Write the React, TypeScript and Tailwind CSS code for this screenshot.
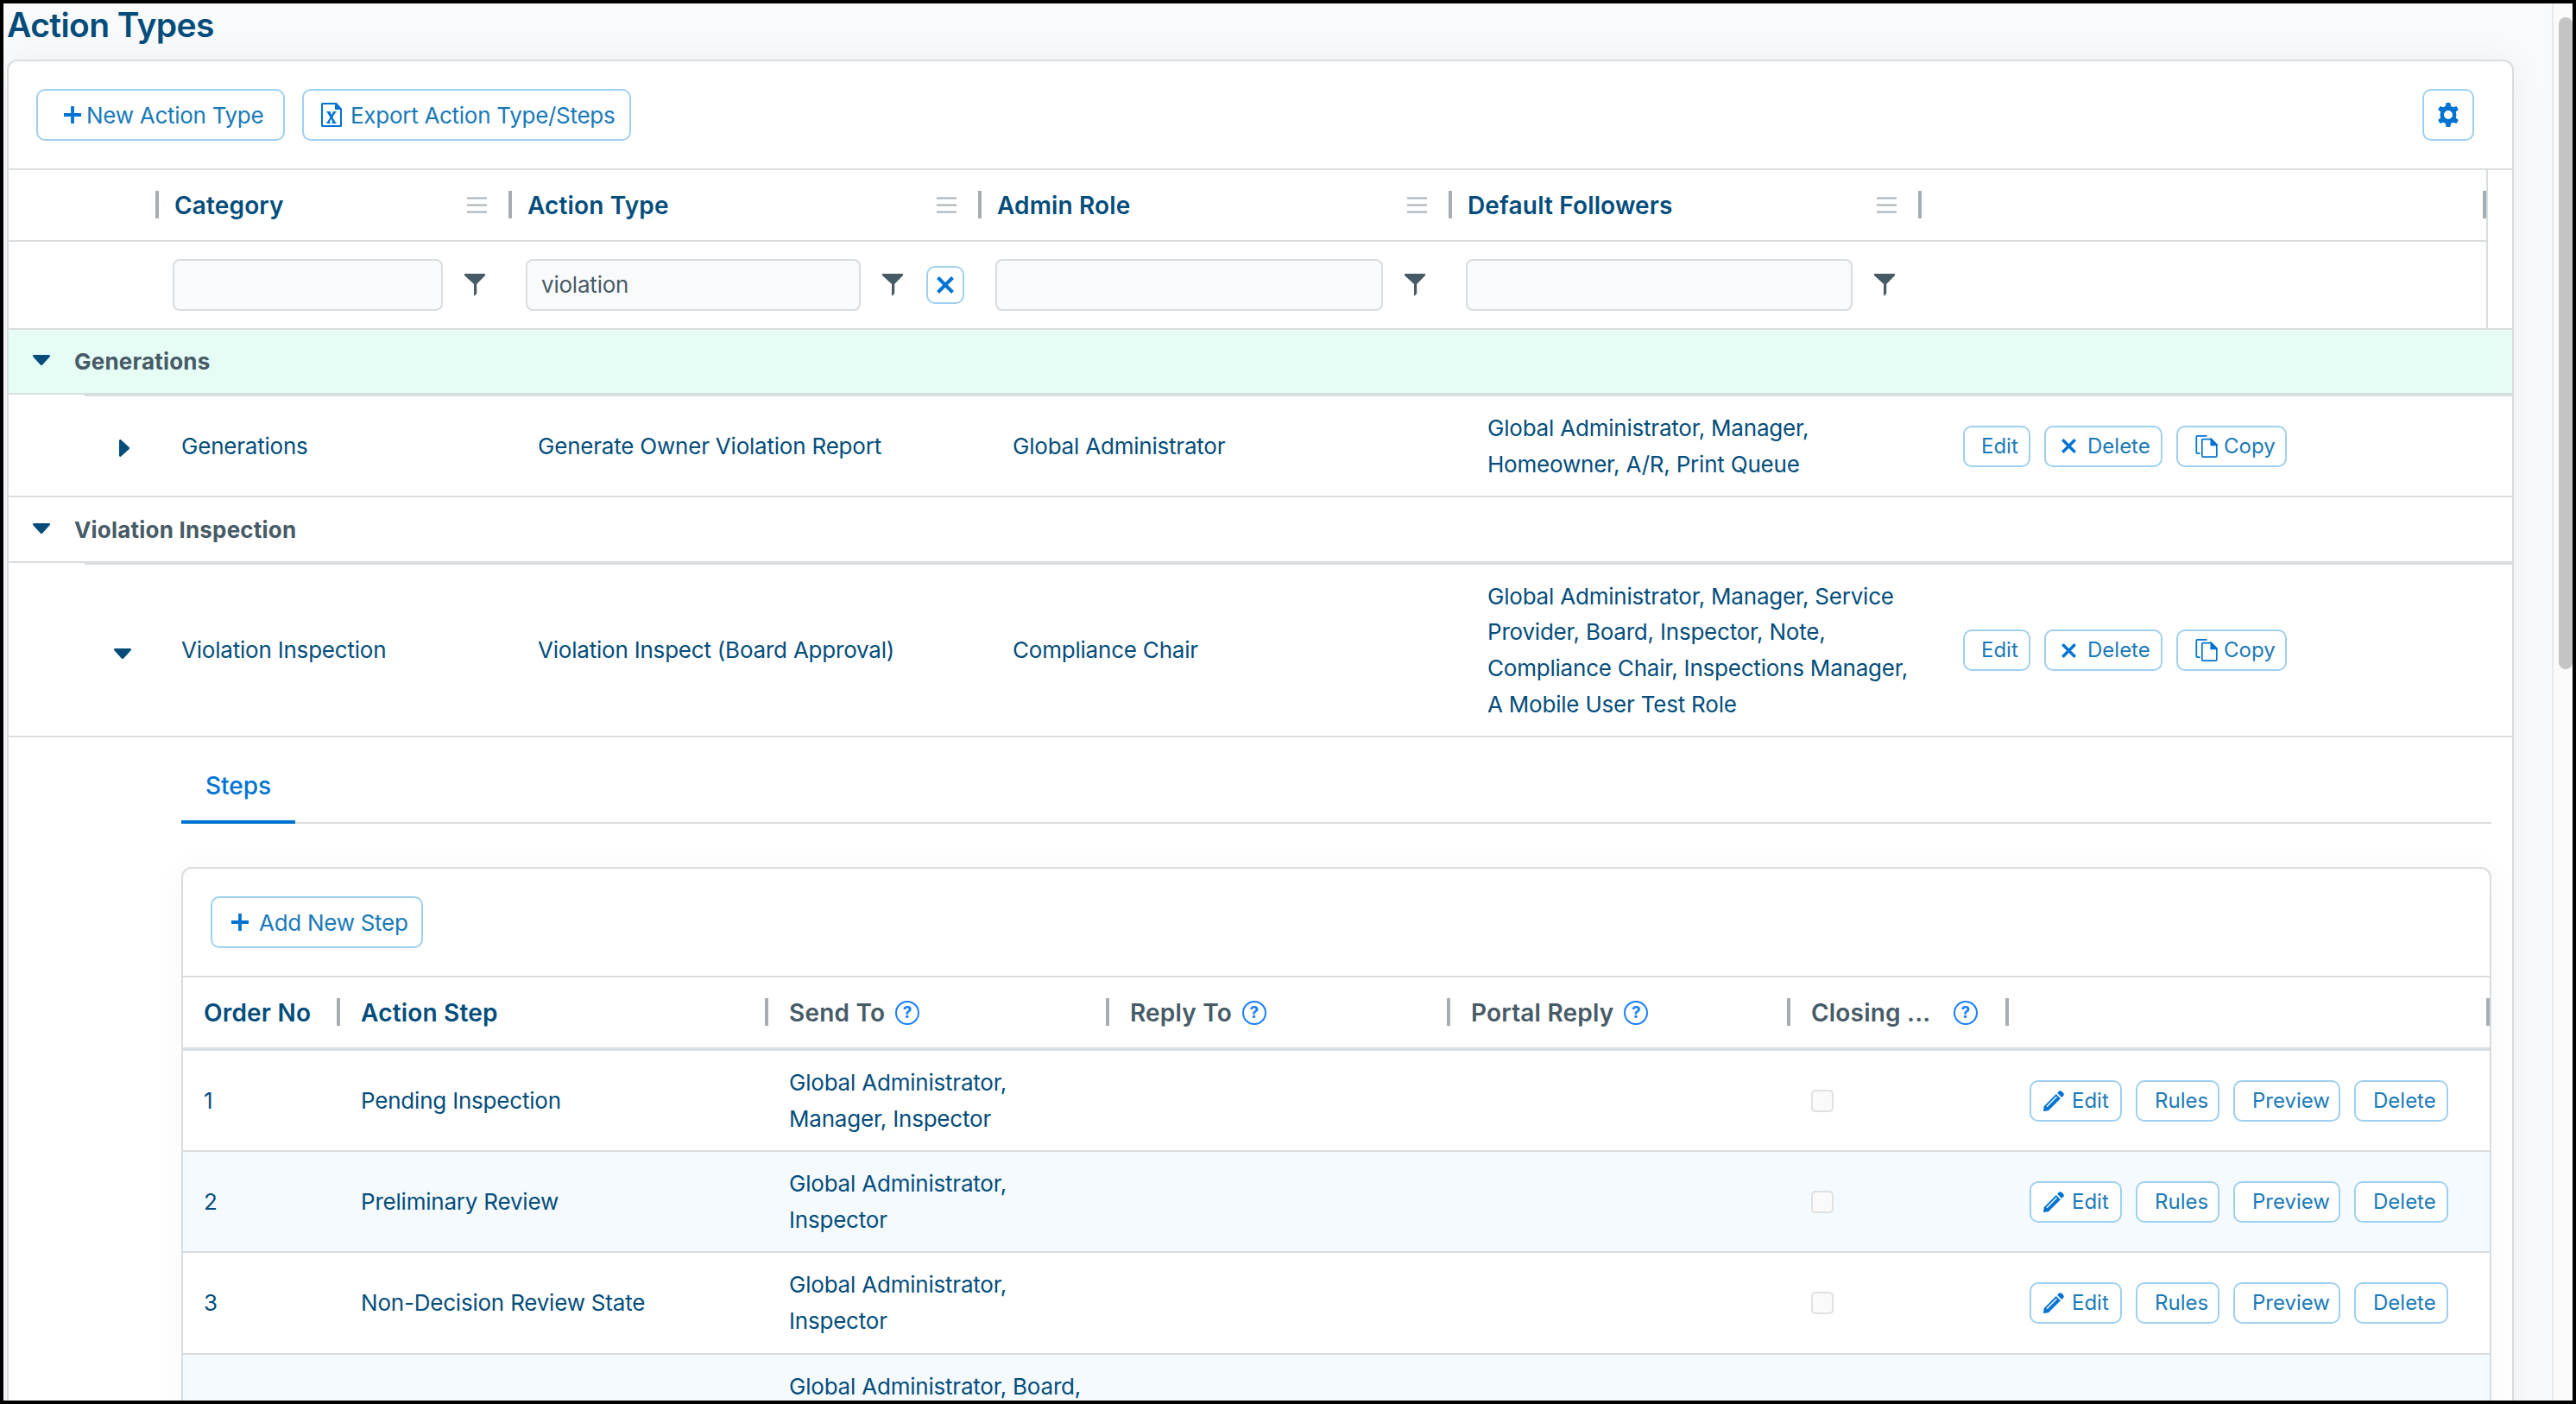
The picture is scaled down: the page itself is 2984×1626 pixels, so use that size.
import React from 'react';

interface ActionType {
  category: string;
  name: string;
  adminRole: string;
  followers: string[];
  expanded: boolean;
}

interface Step {
  order: number;
  name: string;
  sendTo: string[];
}

const generations: ActionType = {
  category: 'Generations',
  name: 'Generate Owner Violation Report',
  adminRole: 'Global Administrator',
  followers: ['Global Administrator, Manager,', 'Homeowner, A/R, Print Queue'],
  expanded: false,
};

const inspection: ActionType = {
  category: 'Violation Inspection',
  name: 'Violation Inspect (Board Approval)',
  adminRole: 'Compliance Chair',
  followers: [
    'Global Administrator, Manager, Service',
    'Provider, Board, Inspector, Note,',
    'Compliance Chair, Inspections Manager,',
    'A Mobile User Test Role',
  ],
  expanded: true,
};

const steps: Step[] = [
  { order: 1, name: 'Pending Inspection', sendTo: ['Global Administrator,', 'Manager, Inspector'] },
  { order: 2, name: 'Preliminary Review', sendTo: ['Global Administrator,', 'Inspector'] },
  { order: 3, name: 'Non-Decision Review State', sendTo: ['Global Administrator,', 'Inspector'] },
];

const PlusIcon = ({ className = '' }: { className?: string }) => (
  <svg className={`size-5 shrink-0 text-[#0073d2] ${className}`} viewBox="0 0 20 20" fill="currentColor">
    <path d="M8.1 0h3.8v8.1H20v3.8h-8.1V20H8.1v-8.1H0V8.1h8.1z" />
  </svg>
);

const CloseIcon = ({ className = '' }: { className?: string }) => (
  <svg className={`shrink-0 text-[#0073d2] ${className}`} viewBox="0 0 20 20" fill="none" stroke="currentColor" strokeWidth="4">
    <path d="M1.5 1.5l17 17M18.5 1.5l-17 17" />
  </svg>
);

const ExcelIcon = () => (
  <svg className="h-7 w-6 shrink-0 text-[#0073d2]" viewBox="0 0 24 28" fill="currentColor">
    <path fillRule="evenodd" d="M1.5 0H18l6 7v19.5a1.5 1.5 0 0 1-1.500 1.500h-21A1.500 1.500 0 0 1 0 26.500v-25A1.500 1.500 0 0 1 1.500 0zM2 2v24h20V8h-6V2z" />
    <path d="M6.500 10h4l1.700 4.200L14 10h3.500v1.600h-1l-3.200 5.200 3.200 5.600h1V24h-5v-1.600h1l-1.900-3.600-2 3.600h1V24h-4.500v-1.600h1l3.300-5.500-3.100-5.300H6.500z" />
  </svg>
);

const GearIcon = () => (
  <svg className="size-7 text-[#0073d2]" viewBox="0 0 28 28" fill="currentColor">
    <path fillRule="evenodd" d="M11.700 0h4.600l.8 3.900c.9.300 1.800.8 2.600 1.400l3.800-1.300 2.300 4-3 2.600a10 10 0 0 1 0 6.800l3 2.600-2.300 4-3.800-1.300c-.8.600-1.700 1.100-2.600 1.400l-.8 3.900h-4.600l-.8-3.900c-.9-.3-1.800-.8-2.600-1.400L4.500 24l-2.300-4 3-2.600a10 10 0 0 1 0-6.800L2.200 8l2.300-4 3.800 1.300c.8-.6 1.700-1.100 2.600-1.400zM14 9a5 5 0 1 0 0 10 5 5 0 0 0 0-10z" />
  </svg>
);

const CopyIcon = () => (
  <svg className="h-[26px] w-[26px] shrink-0 text-[#0073d2]" viewBox="0 0 26 26" fill="none" stroke="currentColor" strokeWidth="1.700">
    <path d="M5.500 21.200H2.500a1.200 1.200 0 0 1-1.200-1.200V2a1.200 1.200 0 0 1 1.200-1.200h11" />
    <path d="M9 4.600h9.500L24.800 11v13a1.200 1.200 0 0 1-1.200 1.200H9A1.200 1.200 0 0 1 7.800 24V5.800A1.200 1.200 0 0 1 9 4.600z" />
    <path d="M18.300 4.600L25 11.300h-6.700z" fill="currentColor" />
  </svg>
);

const PencilIcon = () => (
  <svg className="size-6 shrink-0 text-[#0073d2]" viewBox="0 0 24 24" fill="currentColor">
    <path d="M17.800 1.100a2.600 2.600 0 0 1 3.600 0l1.500 1.500a2.600 2.600 0 0 1 0 3.600l-1.700 1.700-5.100-5.100z" />
    <path fillRule="evenodd" d="M14.800 4.100l5.100 5.100L5.800 23.300 0 24l.7-5.800zM15 6.500L3.300 18.200l1 1L16 7.500z" />
  </svg>
);

const FilterIcon = () => (
  <svg className="h-[26px] w-6 shrink-0 text-[#475b67]" viewBox="0 0 24 26" fill="currentColor">
    <path d="M0 0h24v2l-9.800 10v11L11 26V12L0 2z" />
  </svg>
);

const MenuIcon = () => (
  <svg className="mr-[27px] h-5 w-[23px] shrink-0 text-[#a6aeb4]" viewBox="0 0 23 20" fill="currentColor">
    <path d="M0 .5h23v2H0zM0 8.500h23v2H0zM0 16.500h23v2H0z" />
  </svg>
);

const HelpIcon = ({ className = '' }: { className?: string }) => (
  <span className={`flex size-7 shrink-0 items-center justify-center rounded-full border-2 border-[#1a7fff] text-[19px] leading-none font-bold text-[#1a7fff] ${className}`}>
    ?
  </span>
);

const CaretDown = ({ className = '' }: { className?: string }) => (
  <svg className={`h-3 w-5 shrink-0 text-[#044d7b] ${className}`} viewBox="0 0 20 12" fill="currentColor">
    <path d="M1.500 0h17c1.300 0 2 1.300 1.100 2.300L11.200 11.400a1.700 1.700 0 0 1-2.400 0L.4 2.300C-.5 1.300.2 0 1.500 0z" />
  </svg>
);

const CaretRight = ({ className = '' }: { className?: string }) => (
  <svg className={`h-5 w-3 shrink-0 text-[#044d7b] ${className}`} viewBox="0 0 12 20" fill="currentColor">
    <path d="M0 1.500C0 .2 1.300-.5 2.300.4l9.100 8.400a1.700 1.700 0 0 1 0 2.400l-9.100 8.400C1.300 20.500 0 19.800 0 18.500z" />
  </svg>
);

const Button = ({ className, children }: { className: string; children: React.ReactNode }) => (
  <button className={`flex shrink-0 items-center rounded-[10px] border-2 border-[#9fd0ee] bg-white whitespace-nowrap text-[#1a7ab8] ${className}`}>
    {children}
  </button>
);

// resize handle that sits on the right edge of a header cell
const Handle = ({ last = false }: { last?: boolean }) => (
  <span className={`absolute top-6 h-8 w-1 bg-[#a6aeb4] ${last ? 'right-0' : '-right-0.5'}`} />
);

const HeaderCell = ({ title }: { title: string }) => (
  <div className="relative flex items-center justify-between pl-5">
    <span>{title}</span>
    <MenuIcon />
    <Handle />
  </div>
);

const FilterCell = ({ value = '', clearable = false }: { value?: string; clearable?: boolean }) => (
  <div className="flex items-center pr-[29px] pl-[18px]">
    <input
      defaultValue={value}
      className="h-[60px] min-w-0 flex-1 rounded-lg border-2 border-[#d9dde0] bg-[#f9fafc] px-4 pb-0.5 text-[26px] text-[#475b67]"
    />
    <div className="ml-[25px]"><FilterIcon /></div>
    {clearable && (
      <Button className="-mr-[11px] ml-[27px] size-11 justify-center"><CloseIcon className="size-5" /></Button>
    )}
  </div>
);

const GroupRow = ({ title, highlighted = false }: { title: string; highlighted?: boolean }) => (
  <>
    <div className={`flex items-center border-b-2 border-[#d9dde0] pl-7 ${highlighted ? 'h-[75px] bg-[#e5fdf5]' : 'h-[76px]'}`}>
      <CaretDown className="-mt-[3px] mr-7" />
      <span className="font-bold tracking-[0.2px] text-[#475b67]">{title}</span>
    </div>
    <div className="ml-[88px] h-0.5 bg-[#d9dde0]" />
  </>
);

const ActionRow = ({ item, className }: { item: ActionType; className: string }) => (
  <div className={`grid grid-cols-[180px_413px_550px_550px_551px_1fr] items-center border-b-2 border-[#d9dde0] leading-[41.6px] ${className}`}>
    <div className="flex">
      {item.expanded ? <CaretDown className="mt-2 ml-[122px]" /> : <CaretRight className="mt-1 ml-[128px]" />}
    </div>
    <div className="pl-5">{item.category}</div>
    <div className="pl-5">{item.name}</div>
    <div className="pl-5">{item.adminRole}</div>
    <div className="pl-5 whitespace-nowrap">
      {item.followers.map((line) => <div key={line}>{line}</div>)}
    </div>
    <div className="flex gap-4 pl-5 text-[24px] tracking-normal">
      <Button className="h-12 w-[78px] pl-[19px]">Edit</Button>
      <Button className="h-12 w-[137px] pl-[18px]"><CloseIcon className="mr-[13px] size-[17px]" />Delete</Button>
      <Button className="h-12 w-[128px] pl-5"><CopyIcon /><span className="ml-[7px]">Copy</span></Button>
    </div>
  </div>
);

const StepHeader = ({ title, help = false, end = false }: { title: string; help?: boolean; end?: boolean }) => (
  <div className={`relative flex items-center whitespace-nowrap pl-[26px] ${help ? 'text-[#475b67]' : ''}`}>
    <span>{title}</span>
    {help && <HelpIcon className={end ? 'mr-[34px] ml-auto' : 'ml-3'} />}
    <Handle />
  </div>
);

const App: React.FC = () => {
  return (
    <div className="h-[1626px] w-[2984px] overflow-hidden border-4 border-black bg-[#f9fafc] font-['Inter',sans-serif] text-[26px] tracking-[-0.21px] text-[#044d7b]">
      <div className="flex h-full">
        <div className="min-w-0 flex-1 overflow-hidden pl-1">
          <h1 className="h-[65px] pt-px text-[39px] leading-[48px] font-semibold tracking-[-0.6px]">Action Types</h1>

          <div className="h-[1700px] w-[2904px] rounded-t-[12px] border-2 border-[#d9dde0] bg-white shadow-[0_0_40px_rgba(0,0,0,0.05)]">
            <div className="flex h-[126px] items-center border-b-2 border-[#d9dde0] pr-11 pl-8 tracking-[-0.28px]">
              <Button className="h-[60px] w-[288px] pl-[30px]"><PlusIcon className="mr-1.5" />New Action Type</Button>
              <Button className="ml-5 h-[60px] w-[381px] pl-5"><ExcelIcon /><span className="ml-2.5">Export Action Type/Steps</span></Button>
              <Button className="ml-auto size-[60px] justify-center"><GearIcon /></Button>
            </div>

            {/* Header and filters */}
            <div className="mr-7 border-r-2 border-[#d9dde0]">
              <div className="grid h-[83px] grid-cols-[172px_409px_544px_545px_544px_1fr] border-b-2 border-[#d9dde0] text-[28px] font-semibold tracking-[0.15px]">
                <div className="relative"><Handle /></div>
                <HeaderCell title="Category" />
                <HeaderCell title="Action Type" />
                <HeaderCell title="Admin Role" />
                <HeaderCell title="Default Followers" />
                <div className="relative"><Handle last /></div>
              </div>
              <div className="grid h-[100px] grid-cols-[172px_409px_544px_545px_544px_1fr]">
                <div />
                <FilterCell />
                <FilterCell value="violation" clearable />
                <FilterCell />
                <FilterCell />
              </div>
            </div>
            <div className="h-0.5 bg-[#d9dde0]" />

            <GroupRow title="Generations" highlighted />
            <ActionRow item={generations} className="h-[117px]" />
            <GroupRow title="Violation Inspection" />
            <ActionRow item={inspection} className="h-[200px]" />

            {/* Steps of the expanded action type */}
            <div className="ml-[200px] w-[2676px]">
              <div className="flex h-[100px] border-b-2 border-[#d9dde0]">
                <div className="-mb-0.5 flex w-[132px] justify-center border-b-4 border-[#0073d2] pt-[35px] text-[28px] font-medium tracking-normal text-[#0073d2]">
                  Steps
                </div>
              </div>

              <div className="mt-[50px] h-[800px] rounded-t-[12px] border-2 border-[#d9dde0] shadow-[0_0_40px_rgba(0,0,0,0.03)]">
                <div className="flex h-[126px] items-center border-b-2 border-[#d9dde0] pl-8">
                  <Button className="h-[60px] w-[246px] pl-[22px] tracking-[-0.28px]"><PlusIcon className="mr-3" />Add New Step</Button>
                </div>

                <div className="grid h-[85px] grid-cols-[180px_496px_395px_395px_394px_253px_1fr] border-b-4 border-[#d9dde0] text-[28px] font-semibold tracking-[0.2px]">
                  <div className="relative flex items-center pl-6">Order No<Handle /></div>
                  <StepHeader title="Action Step" />
                  <StepHeader title="Send To" help />
                  <StepHeader title="Reply To" help />
                  <StepHeader title="Portal Reply" help />
                  <StepHeader title="Closing ..." help end />
                  <div className="relative"><Handle last /></div>
                </div>

                {steps.map((step, index) => (
                  <div
                    key={step.order}
                    className={`grid h-[117.2px] grid-cols-[180px_496px_395px_395px_394px_253px_1fr] items-center border-b-2 border-[#d9dde0] leading-[41.6px] ${index % 2 === 1 ? 'bg-[#f5fafe]' : 'bg-white'}`}
                  >
                    <div className="pl-6">{step.order}</div>
                    <div className="pl-[26px]">{step.name}</div>
                    <div className="pl-[26px]">
                      {step.sendTo.map((line) => <div key={line}>{line}</div>)}
                    </div>
                    <div />
                    <div />
                    <div className="pl-[26px]">
                      <div className="size-[26px] rounded-[5px] border-2 border-[#7f7f7f]/20 bg-[#fafafb]" />
                    </div>
                    <div className="flex gap-4 pl-[26px] text-[24px] tracking-normal">
                      <Button className="h-12 w-[107px] pl-3.5"><PencilIcon /><span className="ml-[9px]">Edit</span></Button>
                      <Button className="h-12 w-[97px] pl-5">Rules</Button>
                      <Button className="h-12 w-[124px] pl-5">Preview</Button>
                      <Button className="h-12 w-[109px] pl-5">Delete</Button>
                    </div>
                  </div>
                ))}
                <div className="h-[200px] bg-[#f5fafe] pt-4 pl-[702px] leading-[41.6px]">Global Administrator, Board,</div>
              </div>
            </div>
          </div>
        </div>

        {/* Scrollbar */}
        <div className="w-6 shrink-0 border-l-2 border-[#e8e8e8] bg-[#fafafa] pt-4 pl-1.5">
          <div className="h-[755px] w-4 rounded-full bg-[#c4c4c4]" />
        </div>
      </div>
    </div>
  );
};

export default App;
